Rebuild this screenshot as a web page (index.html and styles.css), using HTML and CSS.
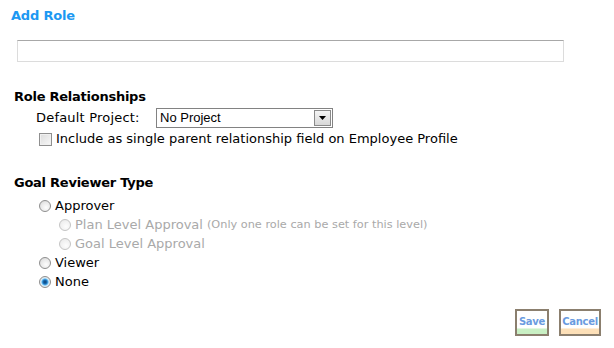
FILE: index.html
```html
<!DOCTYPE html>
<html>
<head>
<meta charset="utf-8">
<link rel="stylesheet" href="styles.css">
</head>
<body>
<div class="page">
  <h1 class="title">Add Role</h1>
  <div class="name-field"><input class="name-input" type="text"></div>

  <h2 class="section-title rel-title">Role Relationships</h2>
  <div class="indent">
    <div class="project-row">
      <span class="project-label">Default Project:</span>
      <div class="select">
        <span class="select-text">No Project</span>
        <span class="select-btn"><svg width="9" height="5" viewBox="0 0 9 5"><path d="M1 0h7L4.5 4z" fill="#000"/></svg></span>
      </div>
    </div>
    <label class="check-row"><span class="checkbox"></span>Include as single parent relationship field on Employee Profile</label>
  </div>

  <h2 class="section-title goal-title">Goal Reviewer Type</h2>
  <div class="indent radios">
    <div class="radio-row"><span class="radio"></span>Approver</div>
    <div class="radio-row sub disabled"><span class="radio"></span>Plan Level Approval <span class="note">(Only one role can be set for this level)</span></div>
    <div class="radio-row sub disabled"><span class="radio"></span>Goal Level Approval</div>
    <div class="radio-row"><span class="radio"></span>Viewer</div>
    <div class="radio-row"><span class="radio checked"></span>None</div>
  </div>

  <div class="actions">
    <button class="btn btn-save">Save</button>
    <button class="btn btn-cancel">Cancel</button>
  </div>
</div>
</body>
</html>
```
FILE: styles.css
```css
html, body {
  margin: 0;
  padding: 0;
  background: #fff;
}
body {
  font-family: "DejaVu Sans", Verdana, sans-serif;
  font-size: 13px;
  color: #000;
}
.page {
  width: 614px;
  height: 348px;
  padding-top: 8px;
  box-sizing: border-box;
}
.title {
  margin: 0 0 0 11px;
  font-size: 13px;
  line-height: 16px;
  font-weight: bold;
  color: #1c98f2;
  letter-spacing: -0.2px;
}
.name-field {
  margin: 16px 0 0 17px;
}
.name-input {
  display: block;
  box-sizing: border-box;
  width: 547px;
  height: 22px;
  margin: 0;
  border: 1px solid #dcdcdc;
  border-top-color: #a8a8a8;
  background: #fff;
  outline: none;
  padding: 0;
}
.section-title {
  margin: 0 0 0 14px;
  font-size: 13px;
  line-height: 16px;
  font-weight: bold;
  letter-spacing: -0.25px;
}
.rel-title { margin-top: 27px; }
.goal-title { margin-top: 28px; }
.indent {
  margin-left: 36px;
}
.project-row {
  display: flex;
  align-items: center;
  margin-top: 3px;
  height: 20px;
}
.project-label {
  width: 120px;
  line-height: 16px;
  letter-spacing: 0.2px;
}
.select {
  box-sizing: border-box;
  width: 177px;
  height: 20px;
  border: 1px solid #828282;
  display: flex;
  align-items: stretch;
  background: #fff;
}
.select-text {
  flex: 1;
  font-family: "Liberation Sans", Arial, sans-serif;
  font-size: 13px;
  line-height: 18px;
  padding-left: 3px;
}
.select-btn {
  box-sizing: border-box;
  width: 17px;
  margin: 1px;
  border: 1px solid #8a8a8a;
  background: linear-gradient(#f4f4f4, #d8d8d8);
  display: flex;
  align-items: center;
  justify-content: center;
}
.check-row {
  display: flex;
  align-items: center;
  margin-top: 3px;
  margin-left: 3px;
  line-height: 16px;
}
.checkbox {
  box-sizing: border-box;
  width: 13px;
  height: 13px;
  margin-right: 4px;
  border: 1px solid #8f8f8f;
  background: linear-gradient(135deg, #dcdcdc, #f8f8f8);
  box-shadow: inset 0 0 0 1px #f0f0f0;
}
.radios {
  margin-top: 5px;
  margin-left: 39px;
}
.radio-row {
  display: flex;
  align-items: center;
  height: 19px;
  line-height: 16px;
}
.radio-row.sub {
  margin-left: 20px;
}
.radio {
  box-sizing: border-box;
  width: 12px;
  height: 12px;
  margin-right: 4px;
  border-radius: 50%;
  border: 1px solid #8e8e8e;
  background: radial-gradient(circle at 60% 65%, #fdfdfd 0, #e9e9e9 55%, #cfcfcf 100%);
}
.radio.checked {
  background: radial-gradient(circle, #0b3e6e 0, #1a6fb8 2px, #58b3ee 3px, #d7eefa 4px, #e6e6e6 5px);
}
.disabled {
  color: #a9a9a9;
}
.disabled .radio {
  border-color: #c4c4c4;
  background: radial-gradient(circle at 60% 65%, #fdfdfd 0, #f0f0f0 60%, #e2e2e2 100%);
}
.note {
  font-size: 11.3px;
  margin-left: 4px;
}
.actions {
  display: flex;
  justify-content: flex-end;
  gap: 10px;
  margin-top: 18px;
  padding-right: 13px;
}
.btn {
  box-sizing: border-box;
  height: 27px;
  padding: 0 0 3px;
  border: 2px solid #8b7f6e;
  font-family: "DejaVu Sans", Verdana, sans-serif;
  font-size: 10px;
  font-weight: bold;
  color: #6a9be0;
  letter-spacing: -0.3px;
  text-align: center;
  cursor: pointer;
}
.btn-save {
  width: 34px;
  background: linear-gradient(#fff 0, #fff 74%, #c9f0c4 78%, #c9f0c4 100%);
}
.btn-cancel {
  width: 42px;
  background: linear-gradient(#fff 0, #fff 74%, #fde0b8 78%, #fde0b8 100%);
}
```
